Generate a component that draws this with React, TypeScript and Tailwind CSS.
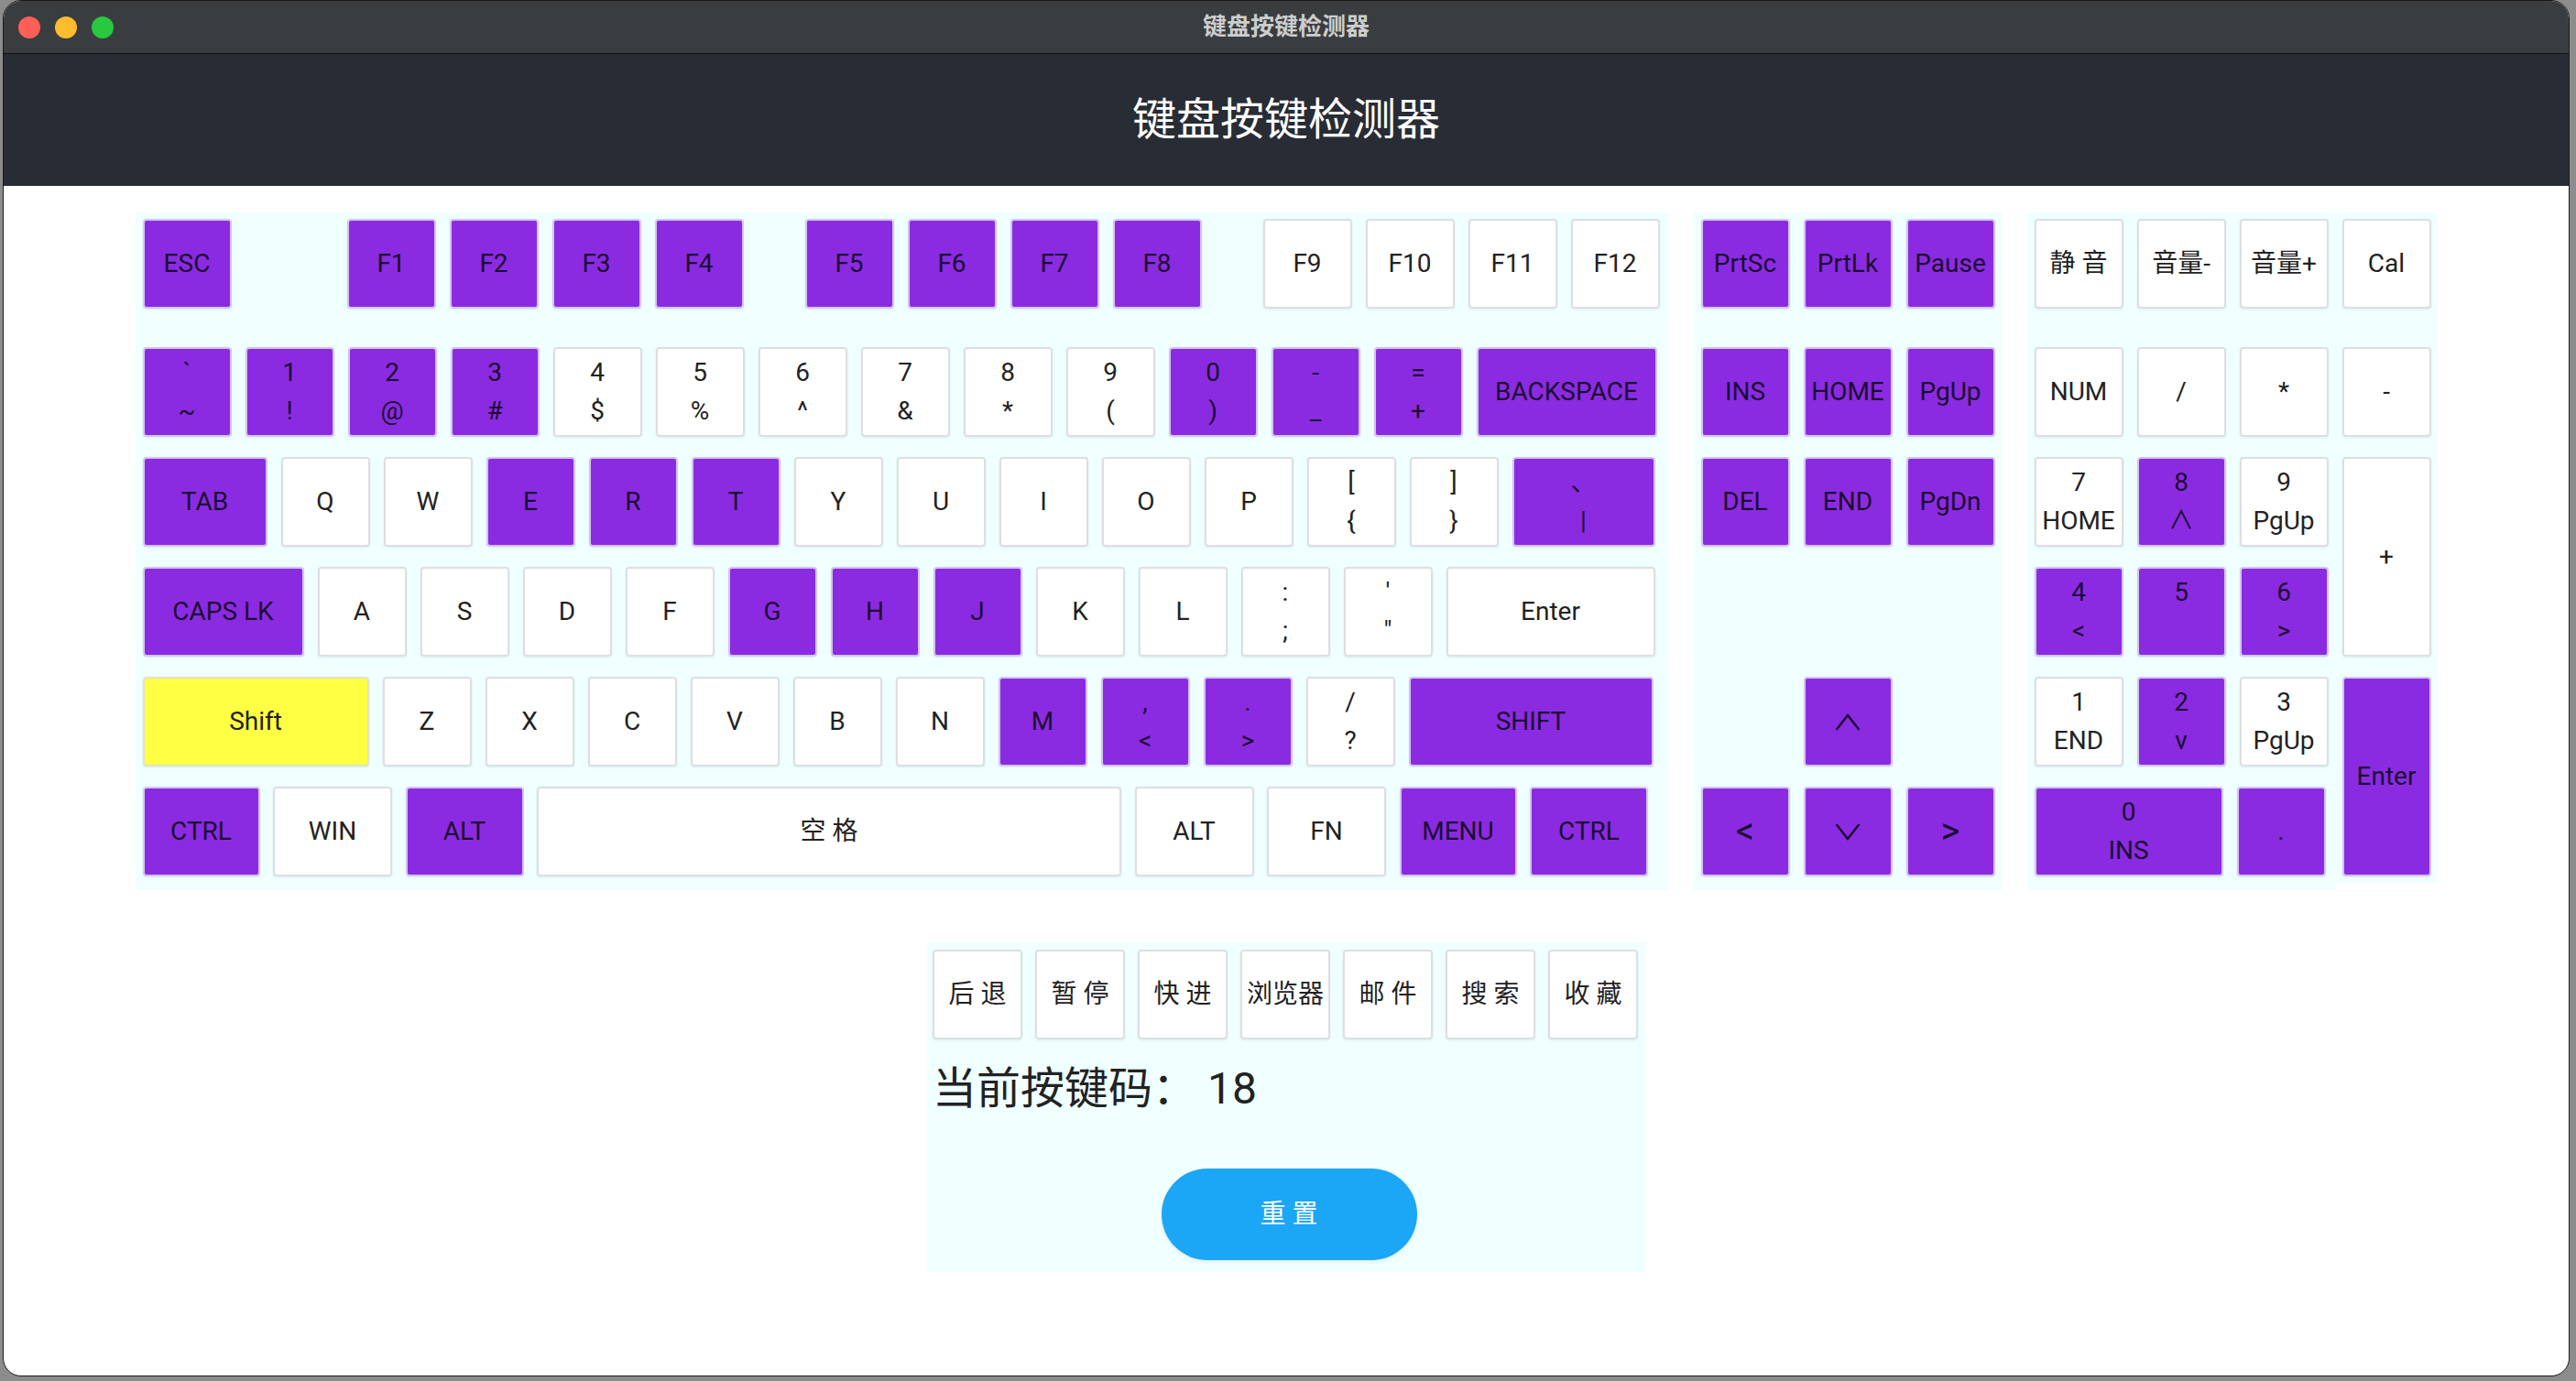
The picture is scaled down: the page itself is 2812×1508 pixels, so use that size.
import React from 'react';

type KeyDef = {
  t: React.ReactNode;
  b?: string;
  c?: 'p' | 'w' | 'y';
  w?: string;
  h?: string;
  fs?: string;
  ml?: string;
};

const p = (t: React.ReactNode, b?: string, extra: Partial<KeyDef> = {}): KeyDef => ({ t, b, c: 'p', ...extra });
const w = (t: React.ReactNode, b?: string, extra: Partial<KeyDef> = {}): KeyDef => ({ t, b, c: 'w', ...extra });

function Key({ k }: { k: KeyDef }) {
  const color =
    k.c === 'p'
      ? 'bg-[#8a2be2] border-[#d5c3ef] text-[#1c0b30]'
      : k.c === 'y'
      ? 'bg-[#ffff44] border-[#e2e2c8] text-[#222222]'
      : 'bg-white border-[#dcdfe2] text-[#222222]';
  return (
    <div
      className={`${k.w ?? 'w-[97px]'} ${k.h ?? 'h-[98px]'} ${k.ml ?? ''} shrink-0 rounded-[4px] border-2 ${color} flex flex-col items-center justify-center ${k.fs ?? 'text-[28px]'} leading-[42px] shadow-[0_1px_3px_rgba(0,0,0,0.08)] whitespace-pre`}
    >
      <span className="flex items-center">{k.t}</span>
      {k.b !== undefined && <span className="text-[28px]">{k.b === '' ? '\u00a0' : k.b}</span>}
    </div>
  );
}

function Row({ keys, gap = 'gap-[15px]', className = '' }: { keys: KeyDef[]; gap?: string; className?: string }) {
  return (
    <div className={`flex ${gap} ${className}`}>
      {keys.map((k, i) => (
        <Key key={i} k={k} />
      ))}
    </div>
  );
}

const UpChevron = () => (
  <svg width="28" height="19" viewBox="0 0 28 19" fill="none">
    <polyline points="1.5,18 14,2 26.5,18" stroke="#1c0b30" strokeWidth="2.4" strokeLinejoin="miter" />
  </svg>
);
const DownChevron = () => (
  <svg width="28" height="19" viewBox="0 0 28 19" fill="none">
    <polyline points="1.5,1 14,17 26.5,1" stroke="#1c0b30" strokeWidth="2.4" strokeLinejoin="miter" />
  </svg>
);

const row1: KeyDef[] = [
  p('ESC'),
  p('F1', undefined, { ml: 'ml-[111px]' }),
  p('F2'),
  p('F3'),
  p('F4'),
  p('F5', undefined, { ml: 'ml-[52px]' }),
  p('F6'),
  p('F7'),
  p('F8'),
  w('F9', undefined, { ml: 'ml-[52px]' }),
  w('F10'),
  w('F11'),
  w('F12'),
];

const row2: KeyDef[] = [
  p('`', '~'),
  p('1', '!'),
  p('2', '@'),
  p('3', '#'),
  w('4', '$'),
  w('5', '%'),
  w('6', '^'),
  w('7', '&'),
  w('8', '*'),
  w('9', '('),
  p('0', ')'),
  p('-', '_'),
  p('=', '+'),
  p('BACKSPACE', undefined, { w: 'w-[197px]' }),
];

const row3: KeyDef[] = [
  p('TAB', undefined, { w: 'w-[136px]' }),
  w('Q'),
  w('W'),
  p('E'),
  p('R'),
  p('T'),
  w('Y'),
  w('U'),
  w('I'),
  w('O'),
  w('P'),
  w('[', '{'),
  w(']', '}'),
  p('、', '|', { w: 'w-[156px]' }),
];

const row4: KeyDef[] = [
  p('CAPS LK', undefined, { w: 'w-[176px]' }),
  w('A'),
  w('S'),
  w('D'),
  w('F'),
  p('G'),
  p('H'),
  p('J'),
  w('K'),
  w('L'),
  w(':', ';'),
  w("'", '"'),
  w('Enter', undefined, { w: 'w-[228px]' }),
];

const row5: KeyDef[] = [
  { t: 'Shift', c: 'y', w: 'w-[247px]' },
  w('Z'),
  w('X'),
  w('C'),
  w('V'),
  w('B'),
  w('N'),
  p('M'),
  p(',', '<'),
  p('.', '>'),
  w('/', '?'),
  p('SHIFT', undefined, { w: 'w-[267px]' }),
];

const row6: KeyDef[] = [
  p('CTRL', undefined, { w: 'w-[128px]' }),
  w('WIN', undefined, { w: 'w-[130px]' }),
  p('ALT', undefined, { w: 'w-[129px]' }),
  w('空 格', undefined, { w: 'w-[638px]' }),
  w('ALT', undefined, { w: 'w-[130px]' }),
  w('FN', undefined, { w: 'w-[130px]' }),
  p('MENU', undefined, { w: 'w-[128px]' }),
  p('CTRL', undefined, { w: 'w-[129px]' }),
];

const arrowFs = 'text-[40px]';

export default function App() {
  return (
    <div className="w-[2812px] h-[1508px] bg-[#8c8c8c] pl-[3px] overflow-hidden font-[family-name:Roboto,Noto_Sans_CJK_SC,sans-serif]">
      <div className="w-[2802px] h-[1503px] rounded-[20px] border border-[#1a1a1a] bg-white overflow-hidden flex flex-col">
        {/* title bar */}
        <div className="h-[58px] shrink-0 bg-[#3a3d40] border-b border-[#111111] grid grid-cols-[1fr_auto_1fr] items-center">
          <div className="flex items-center gap-[16px] pl-[16px]">
            <div className="w-[24px] h-[24px] rounded-full bg-[#fe5f57]" />
            <div className="w-[24px] h-[24px] rounded-full bg-[#febc2e]" />
            <div className="w-[24px] h-[24px] rounded-full bg-[#28c840]" />
          </div>
          <div className="text-[26px] font-semibold text-[#cdcdcd]">键盘按键检测器</div>
          <div />
        </div>
        {/* header */}
        <div className="h-[144px] shrink-0 bg-[#282c34] flex items-center justify-center text-white text-[48px]">
          键盘按键检测器
        </div>
        {/* content */}
        <div className="flex flex-col items-center">
          <div className="flex justify-center items-start gap-[29px] pt-[29px]">
            {/* main */}
            <div className="w-[1672px] bg-[#f0ffff] pt-[7px] pb-[15px] px-[8px] flex flex-col">
              <Row keys={row1} />
              <Row keys={row2} className="mt-[42px]" />
              <Row keys={row3} className="mt-[22px]" />
              <Row keys={row4} className="mt-[22px]" />
              <Row keys={row5} className="mt-[22px]" />
              <Row keys={row6} className="mt-[22px] gap-x-[14.5px]" gap="" />
            </div>
            {/* nav */}
            <div className="w-[336px] bg-[#f0ffff] pt-[7px] pb-[15px] pl-[8px] pr-[7px] flex flex-col">
              <Row keys={[p('PrtSc'), p('PrtLk'), p('Pause')]} />
              <Row keys={[p('INS'), p('HOME'), p('PgUp')]} className="mt-[42px]" />
              <Row keys={[p('DEL'), p('END'), p('PgDn')]} className="mt-[22px]" />
              <div className="h-[98px] mt-[22px]" />
              <Row keys={[p(<UpChevron />, undefined, { ml: 'ml-[112px]' })]} className="mt-[22px]" />
              <Row
                keys={[
                  p('<', undefined, { fs: arrowFs }),
                  p(<DownChevron />),
                  p('>', undefined, { fs: arrowFs }),
                ]}
                className="mt-[22px]"
              />
            </div>
            {/* numpad */}
            <div className="w-[447px] flex flex-col">
              <div className="bg-[#f0ffff] pt-[7px] pl-[7px] pb-[22px] flex flex-col">
                <Row keys={[w('静 音'), w('音量-'), w('音量+'), w('Cal')]} />
                <Row keys={[w('NUM'), w('/'), w('*'), w('-')]} className="mt-[42px]" />
              </div>
              <div className="flex items-start">
                <div className="w-[336px] bg-[#f0ffff] pl-[7px] pb-[15px] flex flex-col gap-[22px]">
                  <Row keys={[w('7', 'HOME'), p('8', '∧'), w('9', 'PgUp')]} />
                  <Row keys={[p('4', '<'), p('5', ''), p('6', '>')]} />
                  <Row keys={[w('1', 'END'), p('2', 'v'), w('3', 'PgUp')]} />
                  <Row keys={[p('0', 'INS', { w: 'w-[206px]' }), p('.')]} />
                </div>
                <div className="w-[111px] bg-[#f0ffff] pl-[7px] pb-[7px] flex flex-col gap-[22px]">
                  <Key k={w('+', undefined, { h: 'h-[218px]' })} />
                  <Key k={p('Enter', undefined, { h: 'h-[218px]' })} />
                </div>
              </div>
            </div>
          </div>

          {/* bottom section */}
          <div className="mt-[58px] w-[784px] bg-[#f0ffff] pt-[7px] pl-[6px] pb-[13px] flex flex-col">
            <Row
              gap="gap-[14px]"
              keys={[
                w('后 退', undefined, { w: 'w-[98px]' }),
                w('暂 停', undefined, { w: 'w-[98px]' }),
                w('快 进', undefined, { w: 'w-[98px]' }),
                w('浏览器', undefined, { w: 'w-[98px]' }),
                w('邮 件', undefined, { w: 'w-[98px]' }),
                w('搜 索', undefined, { w: 'w-[98px]' }),
                w('收 藏', undefined, { w: 'w-[98px]' }),
              ]}
            />
            <div className="mt-[16px] h-[76px] flex items-center text-[48px] text-[#222222] whitespace-pre">
              当前按键码： 18
            </div>
            <div className="mt-[49px] self-center w-[279px] h-[100px] rounded-full bg-[#1ba6f6] flex items-center justify-center text-white text-[28px] whitespace-pre shadow-[0_2px_4px_rgba(0,0,0,0.08)]">
              重 置
            </div>
          </div>
        </div>
      </div>
    </div>
  );
}
